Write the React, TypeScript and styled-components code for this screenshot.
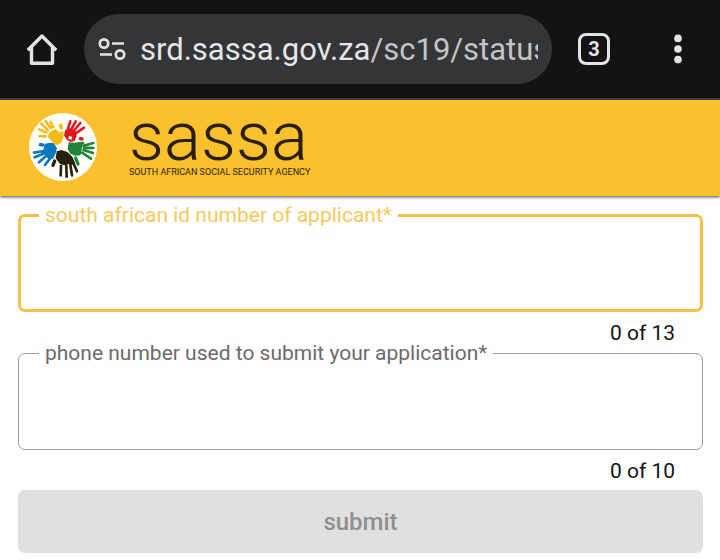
import React, { useState } from "react";
import styled, { createGlobalStyle } from "styled-components";

const GlobalStyle = createGlobalStyle`
  *, *::before, *::after { box-sizing: border-box; }
  body {
    margin: 0;
    background: #fefefe;
    font-family: Roboto, "Liberation Sans", sans-serif;
  }
`;

const BrowserBar = styled.nav`
  display: flex;
  align-items: center;
  height: 100px;
  padding: 0 26px;
  background: #131313;
  border-bottom: 2px solid #444446;
`;

const IconButton = styled.button`
  display: grid;
  place-items: center;
  flex: none;
  width: 32px;
  height: 48px;
  padding: 0;
  border: 0;
  background: none;
  color: #e3e3e3;
`;

const AddressBar = styled.div`
  display: flex;
  align-items: center;
  flex: 1;
  min-width: 0;
  height: 70px;
  margin: 0 26px;
  padding: 0 14px 0 12px;
  gap: 12px;
  border-radius: 35px;
  background: #343537;
`;

const Url = styled.div`
  flex: 1;
  min-width: 0;
  padding-top: 2px;
  overflow: hidden;
  white-space: nowrap;
  font-size: 31px;
  line-height: 44px;
  color: #c4c4c6;
`;

const Host = styled.span`
  color: #e6e6e6;
`;

const TabCount = styled.span`
  display: grid;
  place-items: center;
  width: 32px;
  height: 32px;
  border: 3px solid #e3e3e3;
  border-radius: 8px;
  font: 700 20px/26px Roboto, sans-serif;
`;

const MenuSlot = styled.div`
  display: flex;
  margin-left: 52px;
`;

const Header = styled.header`
  display: flex;
  align-items: center;
  gap: 31px;
  height: 96px;
  padding: 0 28px 2px;
  background: #fbc02d;
  box-shadow: 0 1px 3px rgba(0, 0, 0, 0.7);
`;

const Brand = styled.div`
  display: flex;
  flex-direction: column;
  padding-bottom: 8px;
  color: #2a1e06;
`;

const BrandName = styled.span`
  font-size: 69px;
  font-weight: 300;
  line-height: 58px;
`;

const BrandTagline = styled.span`
  font-size: 9px;
  line-height: 12px;
`;

const Form = styled.form`
  display: flex;
  flex-direction: column;
  padding: 8px 17px 7px 18px;
`;

const Field = styled.fieldset<{ $active?: boolean }>`
  min-width: 0;
  margin: 0;
  padding: ${(p) => (p.$active ? "0 18px" : "0 20px")};
  border: ${(p) => (p.$active ? "3px solid #f3c04a" : "1px solid #9a9a9a")};
  border-radius: 7px;
  color: ${(p) => (p.$active ? "#f5c95f" : "#6b6b6b")};
`;

const Legend = styled.legend`
  padding: 0 6px;
  font-size: 21px;
  line-height: 22px;
`;

const TextInput = styled.input<{ $active?: boolean }>`
  display: block;
  width: 100%;
  height: ${(p) => (p.$active ? "83px" : "85px")};
  padding: 0 6px;
  border: 0;
  outline: 0;
  background: transparent;
  font: 24px Roboto, sans-serif;
  color: #1c1c1c;
`;

const Counter = styled.div`
  padding: 12px 28px 0;
  text-align: right;
  font-size: 21px;
  line-height: 18px;
  color: #141414;
`;

const SubmitButton = styled.button`
  height: 63px;
  margin-top: 10px;
  border: 0;
  border-radius: 7px;
  background: #e0e0e0;
  color: #8f8f8f;
  font: 500 24px Roboto, sans-serif;
`;

const HomeIcon = () => (
  <svg width="32" height="34" viewBox="0 0 32 34" fill="none" stroke="currentColor" strokeWidth="3.4" strokeLinejoin="round">
    <path d="M1.8 18.2 16 4l14.2 14.2" />
    <path d="M5.5 14.5v16.8h21V14.5" />
  </svg>
);

const SiteInfoIcon = () => (
  <svg width="32" height="26" viewBox="0 0 32 26" fill="none" stroke="#e3e3e3" strokeWidth="2.7">
    <circle cx="8" cy="7.5" r="4.2" />
    <path d="M16 7.5h12M4 18.5h12" />
    <circle cx="24" cy="18.5" r="4.2" />
  </svg>
);

const MenuIcon = () => (
  <svg width="10" height="30" viewBox="0 0 10 30" fill="currentColor">
    <circle cx="5" cy="4.4" r="3.8" />
    <circle cx="5" cy="15" r="3.8" />
    <circle cx="5" cy="25.6" r="3.8" />
  </svg>
);

const HandsLogo = () => (
  <svg width="70" height="70" viewBox="0 0 210 210" role="img" aria-label="SASSA emblem" strokeLinecap="round" strokeWidth="8">
    <circle cx="105" cy="105" r="102" fill="#fffefb" />
    <g fill="#f5b915" stroke="#f5b915">
      <path stroke="none" d="M60 76q0-14 12-20l12-6 8 11 14-4 1 17-7 18-14 8-10-5-8-12z" />
      <path d="m34 52 21 10M40 35l20 20M53 28l15 20M68 30l8 16M35 72l18 1" />
      <path strokeWidth="11" d="m98 40 2 7" />
    </g>
    <g fill="#dc1a22" stroke="#dc1a22">
      <path stroke="none" fillRule="evenodd" d="m112 53 14-5 17 8 3 16-6 15-13 3-12-8-7-12zM123 72l-2 9 9 2 3-8z" />
      <path d="m127 28-7 22M143 28l-13 24M157 33l-20 24M168 47l-26 18" />
      <path strokeWidth="10" d="m157 80 5 1" />
    </g>
    <g fill="#21843a" stroke="#21843a">
      <path stroke="none" d="m122 91 18 1 20-3 3 14-3 14-2 13-17 1-14-6-8-14z" />
      <path d="m166 101 30-8M168 107l28 1M166 114l29 9M162 122l27 18M156 95l9-2" />
      <path strokeWidth="10" d="m143 138 7 18" />
    </g>
    <g fill="#26200f" stroke="#26200f">
      <path stroke="none" d="m86 118 14-4 18 6 15 14 8 18-8 6-12-1-10 3-14-3-14-18z" />
      <path d="m99 162-1 28M115 161l1 33M127 158l5 32M136 153l11 25" />
      <path strokeWidth="10" d="m80 147-5 13" />
    </g>
    <g fill="#0877bd" stroke="#0877bd">
      <path stroke="none" d="m50 96 14-4 13 2 10 14-4 16-8 16-14 1-9-11-6-16z" />
      <path d="m50 117-32 5M50 124l-30 12M55 131l-22 20M66 139l-15 20" />
      <path strokeWidth="10" d="m37 98 7 1" />
    </g>
  </svg>
);

type LimitedFieldProps = { id: string; label: string; limit: number; active?: boolean };

const LimitedField = ({ id, label, limit, active }: LimitedFieldProps) => {
  const [value, setValue] = useState("");
  return (
    <>
      <Field $active={active}>
        <Legend>
          <label htmlFor={id}>{label}</label>
        </Legend>
        <TextInput
          id={id}
          $active={active}
          inputMode="numeric"
          maxLength={limit}
          value={value}
          onChange={(e) => setValue(e.target.value)}
        />
      </Field>
      <Counter>{`${value.length} of ${limit}`}</Counter>
    </>
  );
};

export default function App() {
  return (
    <>
      <GlobalStyle />
      <BrowserBar>
        <IconButton aria-label="Home"><HomeIcon /></IconButton>
        <AddressBar>
          <IconButton aria-label="Site information"><SiteInfoIcon /></IconButton>
          <Url><Host>srd.sassa.gov.za</Host>/sc19/status</Url>
        </AddressBar>
        <IconButton aria-label="Open tabs"><TabCount>3</TabCount></IconButton>
        <MenuSlot>
          <IconButton aria-label="Menu"><MenuIcon /></IconButton>
        </MenuSlot>
      </BrowserBar>
      <Header>
        <HandsLogo />
        <Brand>
          <BrandName>sassa</BrandName>
          <BrandTagline>SOUTH AFRICAN SOCIAL SECURITY AGENCY</BrandTagline>
        </Brand>
      </Header>
      <Form onSubmit={(e) => e.preventDefault()}>
        <LimitedField id="id-number" label="south african id number of applicant*" limit={13} active />
        <LimitedField id="phone" label="phone number used to submit your application*" limit={10} />
        <SubmitButton type="submit" disabled>submit</SubmitButton>
      </Form>
    </>
  );
}
